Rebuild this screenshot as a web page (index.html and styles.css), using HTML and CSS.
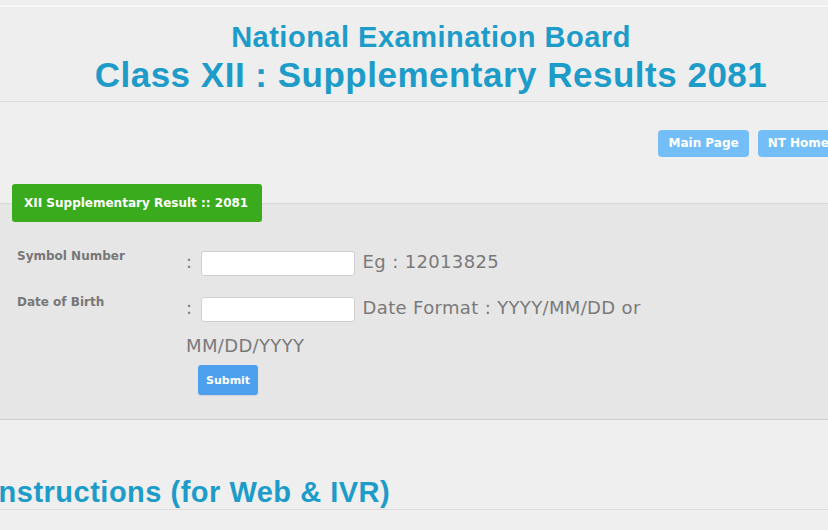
FILE: index.html
```html
<!DOCTYPE html>
<html lang="en">
<head>
  <meta charset="UTF-8" />
  <title>Class XII : Supplementary Results 2081</title>
  <link rel="stylesheet" href="styles.css">
</head>
<body>
  <div class="page">
    <div class="header">
      <h1 class="board">National Examination Board</h1>
      <h2 class="result-title">Class XII : Supplementary Results 2081</h2>
    </div>

    <div class="nav">
      <a class="nav-btn" href="#">Main Page</a>
      <a class="nav-btn" href="#">NT Home</a>
    </div>

    <div class="tabs">
      <span class="tab">XII Supplementary Result :: 2081</span>
    </div>

    <div class="panel">
      <form class="result-form" onsubmit="return false;">
        <table>
          <tr>
            <td class="label">Symbol Number</td>
            <td class="field">: <input type="text" class="text-input"> Eg : 12013825</td>
          </tr>
          <tr class="last-row">
            <td class="label">Date of Birth</td>
            <td class="field">: <input type="text" class="text-input"> Date Format : YYYY/MM/DD or MM/DD/YYYY</td>
          </tr>
          <tr>
            <td></td>
            <td class="actions"><button type="submit" class="submit-btn">Submit</button></td>
          </tr>
        </table>
      </form>
    </div>

    <h3 class="section-title">Instructions (for Web &amp; IVR)</h3>
  </div>
</body>
</html>
```

FILE: styles.css
```css
* { box-sizing: border-box; }

html, body {
  margin: 0;
  background: #efefef;
  overflow: hidden;
}

body {
  font-family: "DejaVu Sans", Verdana, sans-serif;
  color: #777;
}

.page {
  width: 898px;
  margin-left: -18px;
  padding-top: 5px;
}

.header {
  background: #eeeeee;
  border-top: 2px solid #f6f6f6;
  border-bottom: 1px solid #dcdcdc;
  text-align: center;
  height: 97px;
  padding-top: 12px;
}

.board, .result-title, .section-title {
  font-family: "Liberation Sans", Arial, sans-serif;
  font-weight: bold;
  color: #1d9bc9;
  margin: 0;
}

.board {
  font-size: 29px;
  line-height: 36px;
  letter-spacing: 0.5px;
}

.result-title {
  font-size: 35px;
  line-height: 40px;
  letter-spacing: 0.5px;
}

.nav {
  display: flex;
  justify-content: flex-end;
  gap: 9px;
  padding: 28px 41px 0 0;
  height: 82px;
}

.nav-btn {
  display: inline-block;
  background: #74bef8;
  color: #fff;
  font-size: 12px;
  font-weight: bold;
  text-decoration: none;
  line-height: 27px;
  height: 27px;
  padding: 0 10px;
  border-radius: 4px;
}

.tabs {
  padding-left: 30px;
  height: 19px;
  position: relative;
  z-index: 1;
}

.tab {
  display: inline-block;
  background: #3aab1c;
  color: #fff;
  font-size: 12px;
  font-weight: bold;
  line-height: 38px;
  height: 38px;
  padding: 0 14px 0 12px;
  border-radius: 3px;
}

.panel {
  background: #e6e6e6;
  border-top: 1px solid #d8d8d8;
  border-bottom: 1px solid #d0d0d0;
  height: 217px;
  padding: 35px 0 0 31px;
}

.result-form table {
  border-collapse: collapse;
}

.result-form td {
  padding: 4px;
  vertical-align: top;
}

.result-form .label {
  width: 169px;
  font-size: 12px;
  font-weight: bold;
  line-height: 20px;
  color: #777;
  padding-top: 7px;
}

.field {
  width: 470px;
  font-size: 18px;
  line-height: 38px;
  letter-spacing: 0.35px;
  color: #7a7a7a;
}

.result-form .last-row td {
  padding-bottom: 0;
}

.text-input {
  width: 154px;
  height: 25px;
  margin: 0 2px;
  vertical-align: middle;
  background: #fff;
  border: 1px solid #cfcfcf;
  border-radius: 3px;
}

.result-form .actions {
  padding-top: 0;
}

.submit-btn {
  margin-left: 12px;
  background: #4da0ee;
  color: #fff;
  border: none;
  border-radius: 3px;
  box-shadow: 0 1px 1px rgba(0, 0, 0, 0.08);
  font-family: "DejaVu Sans", Verdana, sans-serif;
  font-size: 11px;
  font-weight: bold;
  height: 30px;
  padding: 0 8px;
}

.section-title {
  font-size: 29px;
  line-height: 34px;
  letter-spacing: 0.5px;
  margin: 55px 0 0 8px;
  border-bottom: 1px solid #dcdcdc;
}
```
